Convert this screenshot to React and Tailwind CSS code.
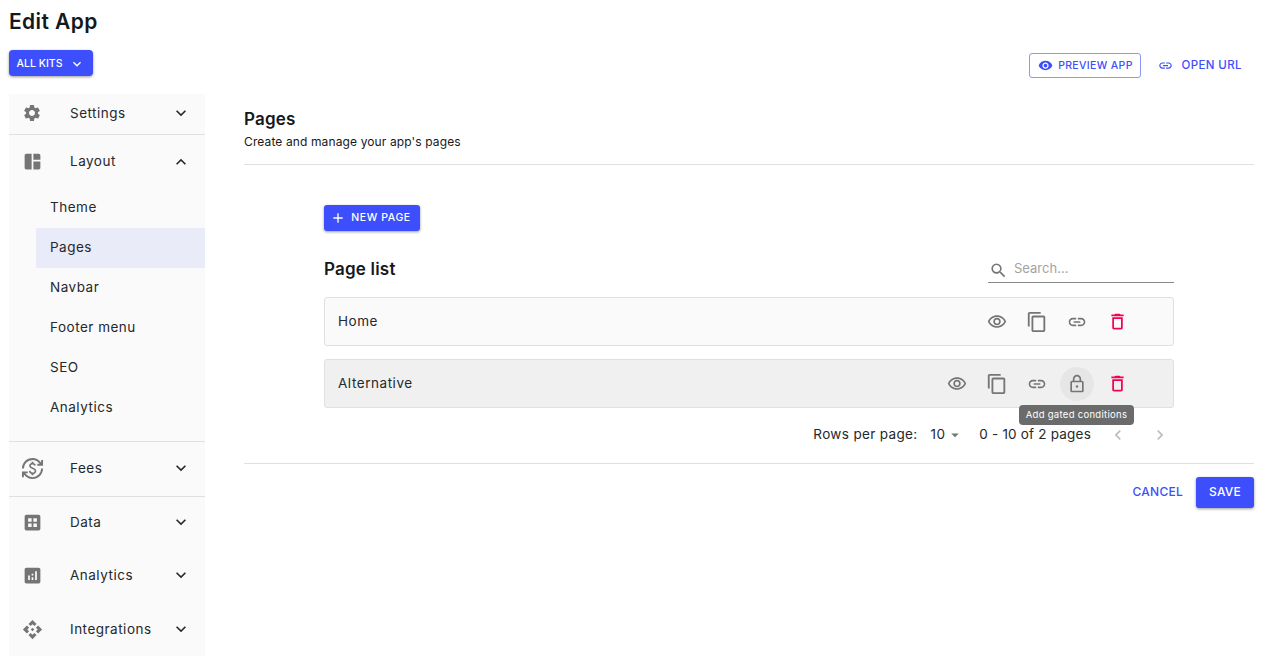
import React from "react";
import {
  MdSettings, MdExpandMore, MdExpandLess, MdSpaceDashboard, MdCurrencyExchange, MdAnalytics, MdApi,
  MdVisibility, MdOutlineVisibility, MdOutlineContentCopy, MdLink, MdDeleteOutline, MdAdd, MdSearch,
  MdArrowDropDown, MdChevronLeft, MdChevronRight,
} from "react-icons/md";

const DataIcon = ({ className }) => (
  <svg viewBox="0 0 24 24" className={className} fill="currentColor">
    <path fillRule="evenodd" d="M5 3h14a2 2 0 0 1 2 2v14a2 2 0 0 1-2 2H5a2 2 0 0 1-2-2V5a2 2 0 0 1 2-2zm2 4v4h4V7H7zm6 0v4h4V7h-4zm-6 6v4h4v-4H7zm6 0v4h4v-4h-4z" />
  </svg>
);

const LockIcon = ({ className }) => (
  <svg viewBox="0 0 24 24" className={className} fill="currentColor">
    <path d="M18 8h-1V6c0-2.76-2.24-5-5-5S7 3.24 7 6v2H6c-1.1 0-2 .9-2 2v10c0 1.1.9 2 2 2h12c1.1 0 2-.9 2-2V10c0-1.1-.9-2-2-2zM9 6c0-1.66 1.34-3 3-3s3 1.34 3 3v2H9V6zm9 14H6V10h12v10zm-6-3.5a1.5 1.5 0 1 0 0-3 1.5 1.5 0 0 0 0 3z" />
  </svg>
);

const Head = ({ icon: Icon, label, open, h, border, iconClass = "", pad = "pb-[2px]" }) => (
  <div className={`flex items-center pl-[13px] pr-[14px] ${pad} ${h} ${border ? "border-b border-[#e0e0e0]" : ""}`}>
    <span className="w-[20px] flex justify-center shrink-0">
      <Icon className={`text-[#757575] shrink-0 ${iconClass}`} />
    </span>
    <span className="ml-[28px] flex-1 text-[13.5px] tracking-[0.5px] text-[#25282c]">{label}</span>
    {open ? <MdExpandLess className="w-[20px] h-[20px] text-[#25282c]" /> : <MdExpandMore className="w-[20px] h-[20px] text-[#25282c]" />}
  </div>
);

const Sub = ({ label, active }) => (
  <div className={`ml-[27px] pl-[14px] pb-[2px] h-[40px] flex items-center text-[13.5px] tracking-[0.5px] text-[#25282c] ${active ? "bg-[#e9ebf8]" : ""}`}>{label}</div>
);

const Action = ({ children, hover }) => (
  <div className={`w-[34px] h-[34px] rounded-full flex items-center justify-center ${hover ? "bg-[#e6e6e6]" : ""}`}>{children}</div>
);

const Row = ({ label, bg, gated }) => (
  <div className={`relative h-[49px] flex items-center pl-[13px] rounded-[3px] border border-[#e0e0e0] ${bg}`}>
    <span className="flex-1 text-[13.5px] tracking-[0.55px] text-[#25282c]">{label}</span>
    <div className="flex items-center gap-[6px] pr-[39px]">
      <Action><MdOutlineVisibility className="w-[20px] h-[20px] text-[#757575]" /></Action>
      <Action><MdOutlineContentCopy className="w-[22px] h-[22px] text-[#757575]" /></Action>
      <Action><MdLink className="w-[20px] h-[20px] text-[#757575]" /></Action>
      {gated && <Action hover><LockIcon className="w-[20px] h-[20px] text-[#757575]" /></Action>}
      <Action><MdDeleteOutline className="w-[21px] h-[21px] text-[#f50057]" /></Action>
    </div>
    {gated && (
      <div className="absolute left-[694px] top-[45px] h-[20px] w-[115px] rounded-[4px] bg-[#6b6b6b] text-white text-[9.5px] tracking-[0.3px] flex items-center justify-center whitespace-nowrap">Add gated conditions</div>
    )}
  </div>
);

export default function App() {
  return (
    <div className="w-[1271px] h-[668px] bg-white overflow-hidden pl-[9px] pr-[17px] font-['Inter',sans-serif] text-[#15181c]">
      <div className="h-[44px] pb-[2px] flex items-center">
        <h1 className="text-[21px] tracking-[0.4px] font-semibold leading-none">Edit App</h1>
      </div>
      <div className="flex items-start justify-between h-[50px]">
        <button className="mt-[6px] w-[84px] h-[26px] rounded-[4px] bg-[#3d4ffc] text-white text-[10.5px] font-medium flex items-center justify-center gap-[7px] pt-px shadow-[0_1px_3px_rgba(0,0,0,0.4)]">
          ALL KITS <MdExpandMore className="w-[16px] h-[16px]" />
        </button>
        <div className="flex items-center mt-[9px] mr-[12px]">
          <button className="w-[112px] h-[25px] rounded-[3px] border border-[#8d98fb] text-[#3d4ffc] text-[10.5px] tracking-[0.35px] font-medium flex items-center justify-center gap-[5px]">
            <MdVisibility className="w-[15px] h-[15px]" /> PREVIEW APP
          </button>
          <div className="ml-[17px] text-[#3d4ffc] text-[11.5px] tracking-[0.4px] font-medium flex items-center gap-[8px]">
            <MdLink className="w-[15px] h-[15px]" /> OPEN URL
          </div>
        </div>
      </div>
      <div className="flex gap-[39px]">
        <aside className="w-[196px] h-[562px] bg-[#fafafa] shrink-0">
          <Head icon={MdSettings} label="Settings" h="h-[41px]" border iconClass="w-[20px] h-[20px]" />
          <Head icon={MdSpaceDashboard} label="Layout" open h="h-[53px]" pad="" iconClass="w-[21px] h-[21px]" />
          <Sub label="Theme" />
          <Sub label="Pages" active />
          <Sub label="Navbar" />
          <Sub label="Footer menu" />
          <Sub label="SEO" />
          <Sub label="Analytics" />
          <div className="h-[14px] border-b border-[#e0e0e0]" />
          <Head icon={MdCurrencyExchange} label="Fees" h="h-[55px]" border iconClass="w-[23px] h-[23px]" />
          <Head icon={DataIcon} label="Data" h="h-[52px]" iconClass="w-[21px] h-[21px]" />
          <Head icon={MdAnalytics} label="Analytics" h="h-[54px]" iconClass="w-[21px] h-[21px]" />
          <Head icon={MdApi} label="Integrations" h="h-[54px]" iconClass="w-[21px] h-[21px]" />
        </aside>
        <main className="flex-1 min-w-0">
          <div className="h-[71px] border-b border-[#e0e0e0] pt-[15px]">
            <h2 className="text-[17px] tracking-[0.2px] font-semibold leading-[20px]">Pages</h2>
            <p className="text-[12px] tracking-[0.12px] leading-[16px] mt-[5px]">Create and manage your app's pages</p>
          </div>
          <div className="px-[80px]">
            <button className="mt-[40px] w-[96px] h-[26px] rounded-[3px] bg-[#3d4ffc] text-white text-[10.5px] tracking-[0.6px] font-medium flex items-center justify-center gap-[5px] shadow-[0_1px_3px_rgba(0,0,0,0.4)]">
              <MdAdd className="w-[16px] h-[16px] -ml-[3px]" /> NEW PAGE
            </button>
            <div className="mt-[25px] h-[27px] flex items-center justify-between">
              <h3 className="text-[17px] tracking-[0.2px] font-semibold">Page list</h3>
              <div className="w-[186px] h-[27px] border-b border-[#8a8a8a] flex items-center">
                <MdSearch className="w-[19px] h-[19px] text-[#757575] mt-[3px] ml-px" />
                <span className="ml-[6px] text-[13px] text-[#a3a3a3]">Search…</span>
              </div>
            </div>
            <div className="mt-[14px] flex flex-col gap-[13px]">
              <Row label="Home" bg="bg-[#fafafa]" />
              <Row label="Alternative" bg="bg-[#f0f0f0]" gated />
            </div>
            <div className="h-[55px] pb-[2px] flex items-center justify-end text-[13.5px] tracking-[0.35px] text-[#25282c]">
              <span>Rows per page:</span>
              <span className="ml-[13px]">10</span>
              <MdArrowDropDown className="w-[18px] h-[18px] text-[#757575] ml-[1px]" />
              <span className="ml-[15px] tracking-[0.2px]">0 - 10 of 2 pages</span>
              <MdChevronLeft className="ml-[17px] w-[20px] h-[20px] text-[#bdbdbd]" />
              <MdChevronRight className="ml-[22px] mr-[4px] w-[20px] h-[20px] text-[#bdbdbd]" />
            </div>
          </div>
          <div className="border-t border-[#e0e0e0] flex justify-end items-center gap-[13px] pt-[13px]">
            <span className="text-[#3d4ffc] text-[12px] tracking-[0.25px] font-medium pb-[2px]">CANCEL</span>
            <button className="w-[58px] h-[31px] pb-[2px] rounded-[3px] bg-[#3d4ffc] text-white text-[12px] tracking-[0.2px] font-medium shadow-[0_1px_3px_rgba(0,0,0,0.4)]">SAVE</button>
          </div>
        </main>
      </div>
    </div>
  );
}
